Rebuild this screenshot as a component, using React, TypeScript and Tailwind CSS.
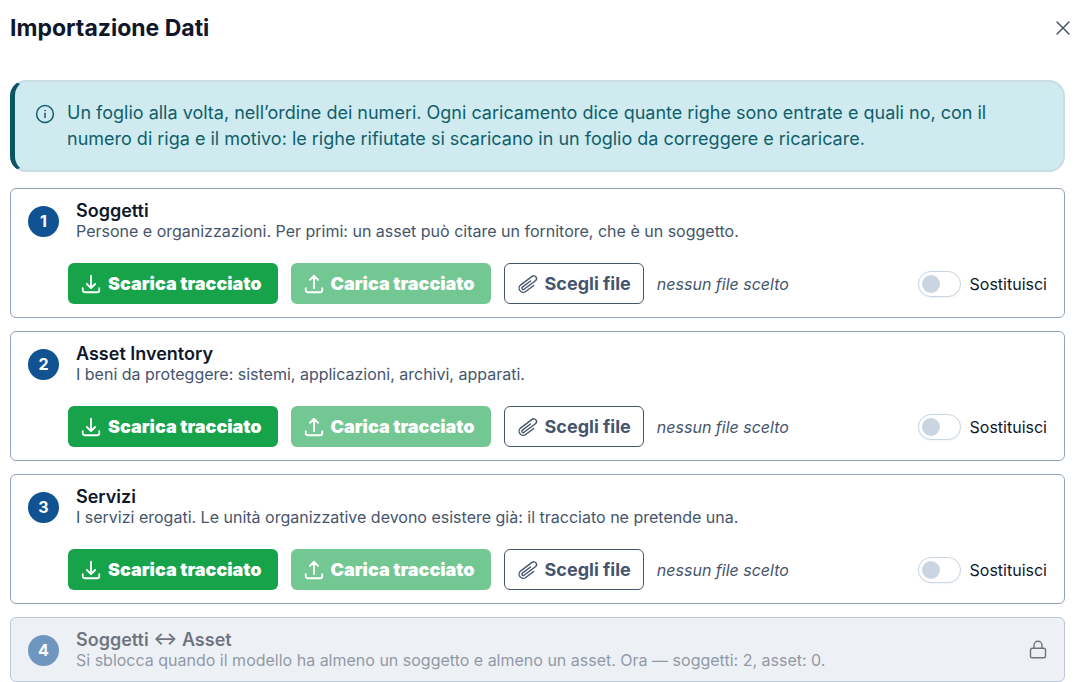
import React, { useState } from 'react';
import { HiOutlineArrowDownTray, HiOutlineArrowUpTray, HiOutlinePaperClip, HiOutlineXMark } from 'react-icons/hi2';

interface Step {
    id: number;
    title: string;
    description: string;
    locked?: boolean;
}

const steps: Step[] = [
    {
        id: 1,
        title: 'Soggetti',
        description: 'Persone e organizzazioni. Per primi: un asset può citare un fornitore, che è un soggetto.',
    },
    {
        id: 2,
        title: 'Asset Inventory',
        description: 'I beni da proteggere: sistemi, applicazioni, archivi, apparati.',
    },
    {
        id: 3,
        title: 'Servizi',
        description: 'I servizi erogati. Le unità organizzative devono esistere già: il tracciato ne pretende una.',
    },
    {
        id: 4,
        title: 'Soggetti ↔ Asset',
        description: 'Si sblocca quando il modello ha almeno un soggetto e almeno un asset. Ora — soggetti: 2, asset: 0.',
        locked: true,
    },
];

const InfoIcon: React.FC = () => (
    <svg viewBox="0 0 20 20" className="mt-1 size-5 shrink-0" fill="none" stroke="currentColor" strokeWidth="1.5" strokeLinecap="round" aria-hidden="true">
        <circle cx="10" cy="10" r="8.4" />
        <path d="M10 9.3v4.2" />
        <circle cx="10" cy="6.6" r="0.4" fill="currentColor" strokeWidth="0.9" />
    </svg>
);

const LockIcon: React.FC = () => (
    <svg viewBox="0 0 20 20" className="size-5 shrink-0 text-slate-900" fill="none" stroke="currentColor" strokeWidth="1.4" strokeLinecap="round" strokeLinejoin="round" aria-hidden="true">
        <rect x="2.5" y="8.2" width="15" height="9.6" rx="1.8" />
        <path d="M6 8.2V5.2a4 4 0 0 1 8 0v3" />
    </svg>
);

const StepHeader: React.FC<{ step: Step }> = ({ step }) => (
    <div className="flex items-center gap-[17px]">
        <span className="flex size-[31px] shrink-0 items-center justify-center rounded-full bg-[#115293] text-[16px] font-bold text-white">
            {step.id}
        </span>
        <div className="min-w-0 flex-1">
            <h2 className="text-[18px] leading-5 font-semibold text-slate-900">{step.title}</h2>
            <p className="text-[16px] leading-5 text-slate-600">{step.description}</p>
        </div>
        {step.locked && <LockIcon />}
    </div>
);

const ImportStep: React.FC<{ step: Step }> = ({ step }) => {
    const [replace, setReplace] = useState(false);

    if (step.locked) {
        return (
            <section className="rounded-md border border-slate-400 bg-slate-200 pt-3 pr-4 pb-[11px] pl-[17px] opacity-60">
                <StepHeader step={step} />
            </section>
        );
    }

    return (
        <section className="rounded-md border border-slate-400 bg-white px-[17px] pt-3 pb-[13px]">
            <StepHeader step={step} />
            <div className="mt-[22px] ml-10 flex flex-wrap items-center gap-[13px]">
                <button type="button" className="flex h-[41px] items-center gap-1.5 rounded-md bg-[#16a34a] pr-4 pl-3 text-[18px] font-black text-white">
                    <HiOutlineArrowDownTray className="size-[22px]" strokeWidth={2} />
                    Scarica tracciato
                </button>
                <button type="button" disabled className="flex h-[41px] items-center gap-1.5 rounded-md bg-[#16a34a] pr-4 pl-3 text-[18px] font-black text-white opacity-60">
                    <HiOutlineArrowUpTray className="size-[22px]" strokeWidth={2} />
                    Carica tracciato
                </button>
                <button type="button" className="flex h-[41px] items-center gap-1.5 rounded-md border border-slate-600 px-3 text-[18px] font-bold text-slate-600">
                    <HiOutlinePaperClip className="size-[22px] rotate-[8deg]" />
                    Scegli file
                </button>
                <span className="text-[16px] text-slate-600 italic">nessun file scelto</span>
                <label className="ml-auto flex items-center gap-[9px] text-[16px] text-slate-900">
                    <input
                        type="checkbox"
                        role="switch"
                        checked={replace}
                        onChange={e => setReplace(e.target.checked)}
                        className="h-[26px] w-[43px] appearance-none rounded-full border border-slate-300 bg-white px-[3px] shadow-xs before:mt-[3px] before:block before:size-[18px] before:rounded-full before:bg-slate-300 checked:before:ml-auto checked:before:bg-[#16a34a]"
                    />
                    Sostituisci
                </label>
            </div>
        </section>
    );
};

const App: React.FC = () => {
    return (
        <main className="bg-white pr-3 pl-[10px] font-['Inter','Liberation_Sans',sans-serif]">
            <header className="flex h-14 items-center justify-between">
                <h1 className="text-[23px] font-bold text-slate-900">Importazione Dati</h1>
                <button type="button" aria-label="Chiudi" className="-mr-[10px] text-slate-600">
                    <HiOutlineXMark className="size-6" />
                </button>
            </header>

            <div className="mt-6 flex gap-3 rounded-2xl border-2 border-l-[5px] border-[#c8dde1] border-l-[#0b5563] bg-[#d0ebf0] py-[18px] pr-[40px] pl-[20px] text-[#0f5e6c]">
                <InfoIcon />
                <p className="text-[18px] leading-[26px]">
                    Un foglio alla volta, nell’ordine dei numeri. Ogni caricamento dice quante righe sono entrate e quali no, con il
                    numero di riga e il motivo: le righe rifiutate si scaricano in un foglio da correggere e ricaricare.
                </p>
            </div>

            <div className="mt-4 flex flex-col gap-[13px]">
                {steps.map(step => (
                    <ImportStep key={step.id} step={step} />
                ))}
            </div>
        </main>
    );
};

export default App;
